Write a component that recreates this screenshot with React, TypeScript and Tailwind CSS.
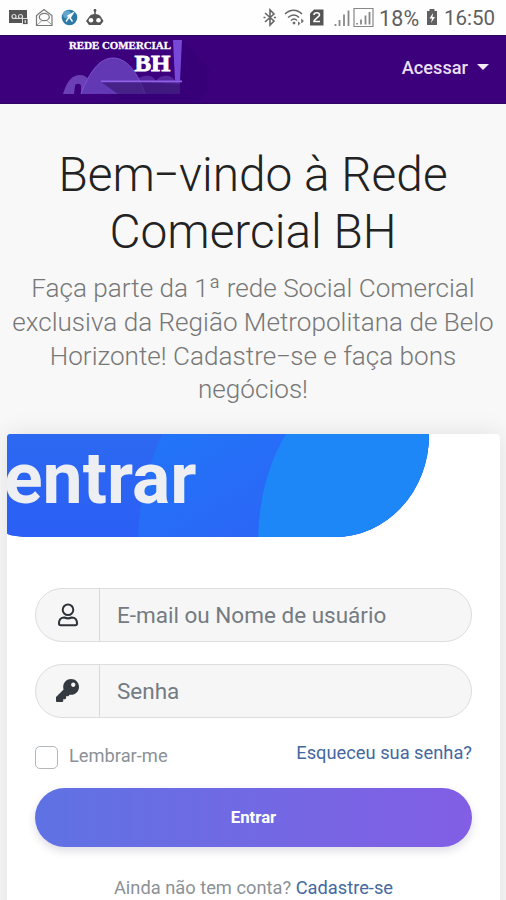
import { FaKey } from 'react-icons/fa';

const fieldBox =
  'flex h-[54px] items-stretch overflow-hidden rounded-full border border-[#dcdddd] bg-[#f6f6f6]';

function SystemIcons() {
  return (
    <svg className="ml-[9px] h-[20px] w-[98px]" viewBox="9 0 98 20" fill="none">
      {/* voicemail */}
      <path d="M9 3h18v9h-4v4H9z" fill="#555" />
      <circle cx="14" cy="9.500" r="2" stroke="#ddd" strokeWidth="1.2" />
      <circle cx="20.500" cy="9.500" r="2" stroke="#ddd" strokeWidth="1.2" />
      <path d="M14 11.500h7" stroke="#ddd" />
      <path d="M22.500 11.500h5.500v6h-5.500z" fill="#555" stroke="#fff" strokeWidth="0.8" />
      <path d="M25.200 13v3" stroke="#fff" />
      {/* open mail */}
      <path d="M36.500 8.500 44 2.500l8 6v10H36.500z" stroke="#777" strokeWidth="1.2" />
      <path d="M37 18l5-4.500h5l5 4.500" stroke="#999" />
      <ellipse cx="44.300" cy="10" rx="5" ry="3.700" fill="#fff" stroke="#777" strokeWidth="1.2" />
      {/* blue app */}
      <circle cx="69.500" cy="10.500" r="7.800" fill="#2c79a8" />
      <circle cx="67" cy="7.500" r="4" fill="#62a6cb" />
      <path d="M66 14.500l4-5.500h-2.500l5.500-3-3 5 2.500 3.500" stroke="#fff" strokeWidth="1.400" />
      {/* robot head */}
      <path d="M95 2v6" stroke="#555" strokeWidth="1.500" />
      <circle cx="95" cy="3.500" r="1.400" fill="#555" />
      <path d="M89 10c1.500-4 10.500-4 12 0l2.500 4-3 4H89l-3-4z" fill="#555" />
      <circle cx="91" cy="13.200" r="2.300" fill="#fff" />
      <circle cx="98.500" cy="13.200" r="2.300" fill="#fff" />
    </svg>
  );
}

function StatusBar() {
  return (
    <div className="flex h-[35px] items-start bg-[#fefefe] pt-[7px] text-[#606060]">
      <SystemIcons />
      <svg className="ml-auto h-[24px] w-[114px]" viewBox="262 7 114 24" fill="none" stroke="#666">
        {/* bluetooth */}
        <path d="m264 13 9 8-4 4V10l4 4-9 8" strokeWidth="1.600" />
        <path d="M262.500 17.500h2M273 17.500h2" strokeWidth="1.500" />
        {/* wifi */}
        <path d="M284 14c5-5 12-5 17 0M287 17.500c4-3.500 8-3.500 11 0M290 20.500c2-2 4-2 6 0" strokeWidth="1.500" />
        <circle cx="293" cy="23" r="1" fill="#666" />
        <path d="m300.500 19 2 2-2 2zM297 21.500l2 2-2 2" fill="#666" strokeWidth="0.500" />
        {/* sim card */}
        <path d="M309 13.500 313 9.500h9.500v16H309z" fill="#555" stroke="none" />
        <path d="M313 15c0-3 5.500-3 5.500 0 0 2-5.500 4-5.500 6.500h6" stroke="#fff" strokeWidth="1.600" />
        {/* signal bars */}
        <path d="M334.500 26v-2M338.500 26v-6M343 26V14.500M347.500 26V10.500" stroke="#888" strokeWidth="1.800" />
        <path d="M353 8.500h19v18h-19z" stroke="#888" strokeWidth="1.2" />
        <path d="M356 24.500v-1.500M360 24.500v-5M364.500 24.500v-9M368.500 24.500v-12.500" stroke="#888" strokeWidth="1.800" />
      </svg>
      <span className="ml-[2px] w-[43px] whitespace-nowrap text-[21.5px] leading-[23px] tracking-[0.2px]">18%</span>
      <svg className="ml-[4px] mt-[1px] h-[18px] w-[12px]" viewBox="0 0 12 18">
        <path d="M3.500 1h5v2H11v14H1V3h2.500z" fill="#606060" />
        <path d="M7 5 3.500 10.500H6L5 15l4-6H6.500z" fill="#fff" />
      </svg>
      <span className="ml-[6px] mr-[10px] w-[52px] whitespace-nowrap text-[20.5px] leading-[23px]">16:50</span>
    </div>
  );
}

function Logo() {
  return (
    <svg className="h-[68px] w-[170px]" viewBox="50 36 170 68">
      <path d="M182 40l28 28v20l-12 14h-80l-12-8h66z" fill="#380078" />
      {/* side arches */}
      <path d="M63 94c4-13 9-19 17-19s13 8 14 19H81v-8c0-3-6-3-6 0l-1 8z" fill="#6a3fb6" />
      <path d="M136 94V82c4-8 17-8 20-1 4-7 16-7 19 0l5-1v14z" fill="#54259e" />
      {/* main arch */}
      <path d="M81 94c8-21 18-36 32-36s25 15 32 36z" fill="#6238b4" />
      <path d="M81 94c8-21 18-36 32-36s25 15 32 36" stroke="#7a52cf" fill="none" />
      <path d="M101 82h46l33 2v10h-62z" fill="#32136b" opacity=".6" />
      <path d="M101 80.500h81v1.700h-81z" fill="#9060e6" />
      {/* tower */}
      <path d="M173 40h9l-2 41h-5z" fill="#7747d6" />
      <g fill="#fff" fontFamily="'Liberation Serif', serif" fontWeight="700">
        <text x="69" y="49" fontSize="11" textLength="102" lengthAdjust="spacingAndGlyphs" stroke="#fff" strokeWidth=".3">
          REDE COMERCIAL
        </text>
        <text x="134.500" y="70.500" fontSize="24" textLength="36" lengthAdjust="spacingAndGlyphs" stroke="#fff" strokeWidth=".8">
          BH
        </text>
      </g>
    </svg>
  );
}

function Navbar() {
  return (
    <nav className="flex h-[69px] items-center border-y border-y-[#2b075f] bg-[#3d007d] pl-[50px] pr-[17px]">
      <Logo />
      <button className="mb-[3px] ml-auto flex items-center text-[18.2px] font-medium text-[#eadff3]">
        Acessar
        <span className="mt-[-1px] ml-[9px] border-x-[6px] border-t-[6px] border-x-transparent border-t-[#f3ecf8]" />
      </button>
    </nav>
  );
}

function CardBanner() {
  return (
    <div className="relative h-[103px] w-[422px] overflow-hidden rounded-tl-[4px] rounded-bl-[25px_4px] rounded-br-[94px_102px] bg-[#2b62f3]">
      <svg className="absolute inset-0" width="422" height="103" viewBox="0 0 422 103">
        <defs>
          <linearGradient id="left" x1="0" y1="0" x2="0" y2="1">
            <stop offset="0" stopColor="#2c69f1" />
            <stop offset="1" stopColor="#2b5ff6" />
          </linearGradient>
          <linearGradient id="middle" x1="0" y1="0" x2="1" y2="1">
            <stop offset="0" stopColor="#2176f8" />
            <stop offset="1" stopColor="#2d63f6" />
          </linearGradient>
        </defs>
        <path d="M0 0h422v103H0z" fill="url(#left)" />
        <path d="M155 0Q133 50 131 103H300V0z" fill="url(#middle)" />
        <path d="M279 0Q253 43 251 103H422V0z" fill="#1e87f8" />
      </svg>
      <span className="relative -ml-[3px] block pt-[8px] text-[71.5px] leading-[74px] font-bold text-[#eeeff2]">
        entrar
      </span>
    </div>
  );
}

function UserIcon() {
  return (
    <svg width="22" height="24" viewBox="0 0 22 24" fill="none" stroke="#2f343a" strokeWidth="2">
      <circle cx="11" cy="6.800" r="5.300" />
      <path d="M7.500 14.500c2 1 5 1 7 0 4-.2 5.500 2.500 5.500 6 0 1.200-.5 1.800-1.700 1.800H3.700C2.500 22.300 2 21.700 2 20.500c0-3.500 1.500-6.200 5.500-6z" />
    </svg>
  );
}

export default function App() {
  return (
    <div className="h-[900px] w-[506px] overflow-hidden bg-[#f8f8f8] font-[Roboto,sans-serif]">
      <StatusBar />
      <Navbar />

      <header className="pt-[43px] text-center font-light">
        <h1 className="text-[47.8px] leading-[57px] text-[#222]">
          Bem<span className="mx-[-3.5px] inline-block scale-x-80">–</span>vindo à Rede
          <br />
          Comercial BH
        </h1>
        <p className="mt-[11px] flex flex-col items-center whitespace-nowrap text-[26.1px] leading-[33.8px] text-[#777]">
          <span>Faça parte da 1ª rede Social Comercial</span>
          <span>exclusiva da Região Metropolitana de Belo</span>
          <span>
            Horizonte! Cadastre<span className="mx-[-1.5px] inline-block scale-x-85">–</span>se e faça bons
          </span>
          <span>negócios!</span>
        </p>
      </header>

      <main className="mt-[26.8px] ml-[7px] h-[500px] w-[493px] rounded-[4px] bg-white shadow-[0_0_25px_rgba(0,0,0,0.1)]">
        <CardBanner />

        <form className="px-[28px] pt-[51px]">
          <div className={fieldBox}>
            <div className="flex w-[64px] items-center justify-center border-r border-[#d6d8d9]">
              <UserIcon />
            </div>
            <input
              className="w-[360px] pt-[2px] pl-[17px] text-[22.5px] outline-none placeholder:text-[#747b82]"
              placeholder="E-mail ou Nome de usuário"
            />
          </div>
          <div className={`${fieldBox} mt-[22px]`}>
            <div className="flex w-[64px] items-center justify-center border-r border-[#d6d8d9]">
              <FaKey size={23} color="#343a40" />
            </div>
            <input
              type="password"
              className="w-[360px] pt-[2px] pl-[17px] text-[22.5px] outline-none placeholder:text-[#747b82]"
              placeholder="Senha"
            />
          </div>

          <div className="mt-[21px] flex h-[49px] items-start justify-between text-[18.3px] leading-[28px]">
            <label className="flex items-start pt-[3px] text-[#8b9196]">
              <span className="mt-[4px] mr-[11px] h-[23px] w-[23px] rounded-[5px] border-[1.5px] border-[#b2b7bc] bg-white" />
              Lembrar-me
            </label>
            <a className="text-[#4568a0]">Esqueceu sua senha?</a>
          </div>

          <button
            type="button"
            className="block h-[59px] w-full rounded-full bg-linear-to-r from-[#5e72e4] to-[#825ee4] text-[16.8px] font-bold text-white shadow-[0_4px_8px_rgba(50,50,93,0.16)]"
          >
            Entrar
          </button>

          <p className="mt-[27px] text-center text-[18.3px] leading-[28px] text-[#8b9196]">
            Ainda não tem conta? <a className="text-[#4568a0]">Cadastre-se</a>
          </p>
        </form>
      </main>
    </div>
  );
}
